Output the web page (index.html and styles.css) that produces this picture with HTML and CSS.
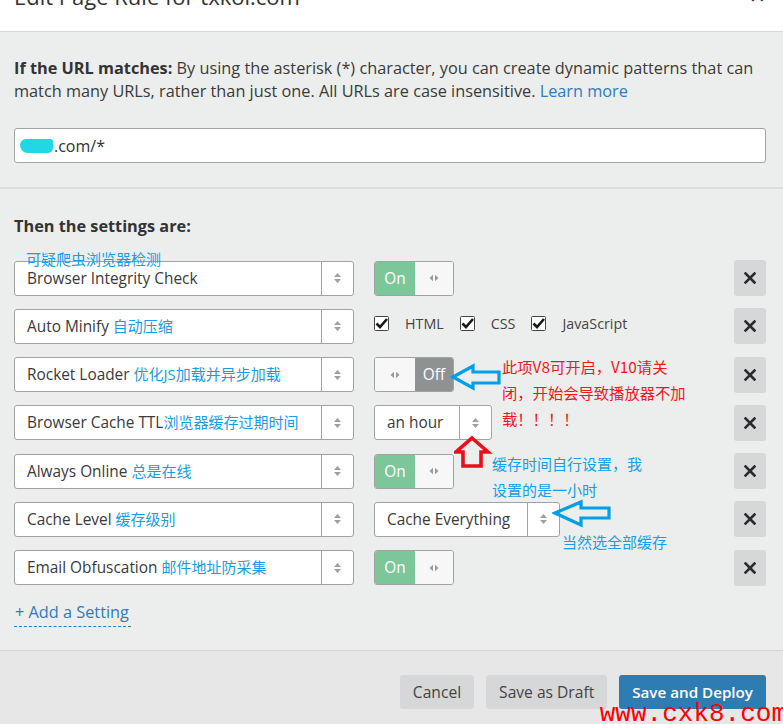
FILE: index.html
```html
<!DOCTYPE html>
<html lang="en">
<head>
<meta charset="utf-8">
<title>Edit Page Rule</title>
<link rel="stylesheet" href="styles.css">
</head>
<body>
<div class="modal">
  <header class="modal-header">
    <h2 class="title">Edit Page Rule for txkol.com</h2>
    <span class="close">✕</span>
  </header>

  <section class="url-section">
    <p class="intro"><strong>If the URL matches:</strong> By using the asterisk (*) character, you can create dynamic patterns that can match many URLs, rather than just one. All URLs are case insensitive. <a class="link" href="#">Learn more</a></p>
    <div class="url-input"><span class="blur"></span>.com/*</div>
  </section>

  <section class="settings">
    <h3 class="settings-title">Then the settings are:</h3>
    <div class="rows">
      <div class="row">
        <div class="select"><span class="label">Browser Integrity Check</span><span class="arrows"><svg width="9" height="12" viewBox="0 0 9 12"><path d="M4.5 1 L8 5 H1Z M4.5 11 L8 7 H1Z" fill="#a0a0a0"/></svg></span></div>
        <div class="value">
          <div class="toggle on"><span class="seg seg-on">On</span><span class="seg seg-knob"><svg width="10" height="8" viewBox="0 0 10 8"><path d="M0.5 4 L4 0.8 V7.2Z M9.5 4 L6 0.8 V7.2Z" fill="#9a9a9a"/></svg></span></div>
        </div>
        <button class="del"><svg width="12" height="12" viewBox="0 0 12 12"><path d="M1.5 1.5 L10.5 10.5 M10.5 1.5 L1.5 10.5" stroke="#2b2b2b" stroke-width="2.6" stroke-linecap="square"/></svg></button>
      </div>

      <div class="row">
        <div class="select"><span class="label">Auto Minify <span class="note">自动压缩</span></span><span class="arrows"><svg width="9" height="12" viewBox="0 0 9 12"><path d="M4.5 1 L8 5 H1Z M4.5 11 L8 7 H1Z" fill="#a0a0a0"/></svg></span></div>
        <div class="value checks">
          <label class="check"><svg width="15" height="15" viewBox="0 0 15 15"><rect x="0.5" y="0.5" width="14" height="14" rx="1" fill="#fff" stroke="#444"/><path d="M2.5 7.5 L6 11 L13 3" fill="none" stroke="#1a1a1a" stroke-width="2.6"/></svg><span>HTML</span></label>
          <label class="check"><svg width="15" height="15" viewBox="0 0 15 15"><rect x="0.5" y="0.5" width="14" height="14" rx="1" fill="#fff" stroke="#444"/><path d="M2.5 7.5 L6 11 L13 3" fill="none" stroke="#1a1a1a" stroke-width="2.6"/></svg><span>CSS</span></label>
          <label class="check"><svg width="15" height="15" viewBox="0 0 15 15"><rect x="0.5" y="0.5" width="14" height="14" rx="1" fill="#fff" stroke="#444"/><path d="M2.5 7.5 L6 11 L13 3" fill="none" stroke="#1a1a1a" stroke-width="2.6"/></svg><span>JavaScript</span></label>
        </div>
        <button class="del"><svg width="12" height="12" viewBox="0 0 12 12"><path d="M1.5 1.5 L10.5 10.5 M10.5 1.5 L1.5 10.5" stroke="#2b2b2b" stroke-width="2.6" stroke-linecap="square"/></svg></button>
      </div>

      <div class="row">
        <div class="select"><span class="label">Rocket Loader <span class="note">优化JS加载并异步加载</span></span><span class="arrows"><svg width="9" height="12" viewBox="0 0 9 12"><path d="M4.5 1 L8 5 H1Z M4.5 11 L8 7 H1Z" fill="#a0a0a0"/></svg></span></div>
        <div class="value">
          <div class="toggle off"><span class="seg seg-knob"><svg width="10" height="8" viewBox="0 0 10 8"><path d="M0.5 4 L4 0.8 V7.2Z M9.5 4 L6 0.8 V7.2Z" fill="#9a9a9a"/></svg></span><span class="seg seg-off">Off</span></div>
        </div>
        <button class="del"><svg width="12" height="12" viewBox="0 0 12 12"><path d="M1.5 1.5 L10.5 10.5 M10.5 1.5 L1.5 10.5" stroke="#2b2b2b" stroke-width="2.6" stroke-linecap="square"/></svg></button>
      </div>

      <div class="row">
        <div class="select"><span class="label">Browser Cache TTL<span class="note">浏览器缓存过期时间</span></span><span class="arrows"><svg width="9" height="12" viewBox="0 0 9 12"><path d="M4.5 1 L8 5 H1Z M4.5 11 L8 7 H1Z" fill="#a0a0a0"/></svg></span></div>
        <div class="value">
          <div class="select small hour"><span class="label">an hour</span><span class="arrows"><svg width="9" height="12" viewBox="0 0 9 12"><path d="M4.5 1 L8 5 H1Z M4.5 11 L8 7 H1Z" fill="#a0a0a0"/></svg></span></div>
        </div>
        <button class="del"><svg width="12" height="12" viewBox="0 0 12 12"><path d="M1.5 1.5 L10.5 10.5 M10.5 1.5 L1.5 10.5" stroke="#2b2b2b" stroke-width="2.6" stroke-linecap="square"/></svg></button>
      </div>

      <div class="row">
        <div class="select"><span class="label">Always Online <span class="note">总是在线</span></span><span class="arrows"><svg width="9" height="12" viewBox="0 0 9 12"><path d="M4.5 1 L8 5 H1Z M4.5 11 L8 7 H1Z" fill="#a0a0a0"/></svg></span></div>
        <div class="value">
          <div class="toggle on"><span class="seg seg-on">On</span><span class="seg seg-knob"><svg width="10" height="8" viewBox="0 0 10 8"><path d="M0.5 4 L4 0.8 V7.2Z M9.5 4 L6 0.8 V7.2Z" fill="#9a9a9a"/></svg></span></div>
        </div>
        <button class="del"><svg width="12" height="12" viewBox="0 0 12 12"><path d="M1.5 1.5 L10.5 10.5 M10.5 1.5 L1.5 10.5" stroke="#2b2b2b" stroke-width="2.6" stroke-linecap="square"/></svg></button>
      </div>

      <div class="row">
        <div class="select"><span class="label">Cache Level <span class="note">缓存级别</span></span><span class="arrows"><svg width="9" height="12" viewBox="0 0 9 12"><path d="M4.5 1 L8 5 H1Z M4.5 11 L8 7 H1Z" fill="#a0a0a0"/></svg></span></div>
        <div class="value">
          <div class="select small cache"><span class="label">Cache Everything</span><span class="arrows"><svg width="9" height="12" viewBox="0 0 9 12"><path d="M4.5 1 L8 5 H1Z M4.5 11 L8 7 H1Z" fill="#a0a0a0"/></svg></span></div>
        </div>
        <button class="del"><svg width="12" height="12" viewBox="0 0 12 12"><path d="M1.5 1.5 L10.5 10.5 M10.5 1.5 L1.5 10.5" stroke="#2b2b2b" stroke-width="2.6" stroke-linecap="square"/></svg></button>
      </div>

      <div class="row">
        <div class="select"><span class="label">Email Obfuscation <span class="note">邮件地址防采集</span></span><span class="arrows"><svg width="9" height="12" viewBox="0 0 9 12"><path d="M4.5 1 L8 5 H1Z M4.5 11 L8 7 H1Z" fill="#a0a0a0"/></svg></span></div>
        <div class="value">
          <div class="toggle on"><span class="seg seg-on">On</span><span class="seg seg-knob"><svg width="10" height="8" viewBox="0 0 10 8"><path d="M0.5 4 L4 0.8 V7.2Z M9.5 4 L6 0.8 V7.2Z" fill="#9a9a9a"/></svg></span></div>
        </div>
        <button class="del"><svg width="12" height="12" viewBox="0 0 12 12"><path d="M1.5 1.5 L10.5 10.5 M10.5 1.5 L1.5 10.5" stroke="#2b2b2b" stroke-width="2.6" stroke-linecap="square"/></svg></button>
      </div>
    </div>
    <a class="add" href="#">+ Add a Setting</a>
  </section>

  <footer class="modal-footer">
    <button class="btn">Cancel</button>
    <button class="btn">Save as Draft</button>
    <button class="btn primary">Save and Deploy</button>
  </footer>

  <!-- annotations drawn over the screenshot -->
  <span class="ann blue ann-1">可疑爬虫浏览器检测</span>
  <svg class="arrow arrow-1" width="56" height="28" viewBox="0 0 56 28"><polygon points="3,14 23,3 23,9 49,9 49,20 23,20 23,25" fill="none" stroke="#00a0e9" stroke-width="3.2" stroke-linejoin="miter"/></svg>
  <p class="ann red ann-2">此项V8可开启，V10请关<br>闭，开始会导致播放器不加<br>载！！！！</p>
  <svg class="arrow arrow-2" width="40" height="34" viewBox="0 0 40 34"><polygon points="18,3 34,17 27,17 27,31 9,31 9,17 2,17" fill="none" stroke="#e8101a" stroke-width="3.6" stroke-linejoin="miter"/></svg>
  <p class="ann blue ann-3">缓存时间自行设置，我<br>设置的是一小时</p>
  <svg class="arrow arrow-3" width="62" height="30" viewBox="0 0 62 30"><polygon points="3,15 29,4 29,10 57,10 57,20 29,20 29,27" fill="none" stroke="#00a0e9" stroke-width="3.2" stroke-linejoin="miter"/></svg>
  <span class="ann blue ann-4">当然选全部缓存</span>
  <span class="watermark">www.cxk8.com</span>
</div>
</body>
</html>
```

FILE: styles.css
```css
* { box-sizing: border-box; }
html, body { margin: 0; padding: 0; }
body {
  background: #eceeed;
  font-family: "Open Sans", "Noto Sans CJK SC", sans-serif;
  color: #333;
  overflow: hidden;
}
.modal {
  position: relative;
  width: 783px;
  height: 724px;
  background: #eceeed;
  overflow: hidden;
}
.modal-header {
  height: 32px;
  background: #fff;
  border-bottom: 1px solid #d6d8d8;
  display: flex;
  justify-content: space-between;
  align-items: flex-start;
  padding: 0 17px 0 14px;
}
.title {
  margin: -17px 0 0;
  font-size: 22px;
  line-height: 26px;
  font-weight: 400;
  color: #333;
}
.close {
  margin-top: -15px;
  font-size: 20px;
  line-height: 22px;
  color: #333;
}
.url-section {
  padding: 25px 17px 24px 14px;
  border-bottom: 2px solid #dcdedd;
}
.intro {
  margin: 0;
  font-size: 16.3px;
  line-height: 23px;
  color: #3a3a3a;
}
.intro strong { font-weight: 700; color: #333; }
.link { color: #2f7bbf; text-decoration: none; }
.url-input {
  margin-top: 25px;
  height: 35px;
  background: #fff;
  border: 1px solid #a3a5a5;
  border-radius: 3px;
  display: flex;
  align-items: center;
  padding-left: 5px;
  font-size: 16px;
  color: #333;
}
.blur {
  display: inline-block;
  width: 33px;
  height: 14px;
  background: #22d6e6;
  border-radius: 6px 3px 5px 8px;
  margin-right: 1px;
}
.settings {
  padding: 26px 17px 0 14px;
  height: 461px;
}
.settings-title {
  margin: 0 0 22px;
  font-size: 16.3px;
  line-height: 23px;
  font-weight: 700;
  color: #333;
}
.rows {
  display: flex;
  flex-direction: column;
  gap: 13.3px;
}
.row {
  display: grid;
  grid-template-columns: 340px 1fr 32px;
  column-gap: 20px;
  align-items: center;
  height: 35px;
}
.select {
  height: 35px;
  background: #fff;
  border: 1px solid #a0a3a3;
  border-radius: 3px;
  display: flex;
  align-items: stretch;
}
.select .label {
  flex: 1;
  display: block;
  line-height: 33px;
  padding-left: 12px;
  font-size: 15.4px;
  color: #3a3a3a;
  white-space: nowrap;
  overflow: hidden;
}
.note {
  color: #1b9be0;
  font-size: 15px;
}
.arrows {
  width: 32px;
  border-left: 1px solid #a0a3a3;
  display: flex;
  align-items: center;
  justify-content: center;
}
.select.small { display: inline-flex; }
.select.hour { width: 118px; }
.select.cache { width: 186px; }
.value { display: flex; align-items: center; }
.toggle {
  width: 80px;
  height: 35px;
  border: 1px solid #a0a3a3;
  border-radius: 3px;
  display: flex;
  overflow: hidden;
  background: #f7f7f7;
}
.seg {
  width: 40px;
  display: flex;
  align-items: center;
  justify-content: center;
  font-size: 15.4px;
}
.seg-on { background: #7cc799; color: #fff; }
.seg-off { background: #8e9293; color: #fff; flex: 1; }
.seg-knob { flex: 1; background: #f7f7f7; }
.toggle.off .seg-knob { flex: none; width: 40px; }
.checks { gap: 16px; }
.check {
  display: flex;
  align-items: center;
  gap: 16px;
  font-size: 14.3px;
  color: #444;
  margin-top: -6px;
}
.del {
  width: 32px;
  height: 36px;
  border: 0;
  border-radius: 3px;
  background: #d6d7d8;
  display: flex;
  align-items: center;
  justify-content: center;
  padding: 0;
}
.add {
  display: inline-block;
  margin-top: 16px;
  font-size: 16.3px;
  line-height: 22px;
  color: #2f7bbf;
  text-decoration: none;
  border-bottom: 1px dashed #2f7bbf;
  padding: 0 2px 3px 1px;
}
.modal-footer {
  border-top: 1px solid #d3d5d5;
  background: #e7e7e7;
  height: 74px;
  padding: 24px 17px 0 0;
  display: flex;
  justify-content: flex-end;
  align-items: flex-start;
  gap: 12px;
}
.btn {
  height: 34px;
  border: 0;
  border-radius: 3px;
  background: #d6d7d8;
  color: #444;
  font-family: "Open Sans", sans-serif;
  font-size: 15.6px;
  padding: 0 13px;
}
.btn.primary {
  background: #2d7db3;
  color: #fff;
  font-weight: 600;
  font-size: 15.2px;
  padding: 0 13px;
}
.ann {
  position: absolute;
  margin: 0;
  font-size: 15px;
  line-height: 26px;
  font-family: "Noto Sans CJK SC", sans-serif;
  white-space: nowrap;
}
.blue { color: #169ee6; }
.red { color: #f01818; }
.ann-1 { left: 26px; top: 246px; line-height: 26px; }
.ann-2 { left: 502px; top: 353px; font-size: 15.3px; }
.ann-3 { left: 492px; top: 451px; }
.ann-4 { left: 562px; top: 529px; }
.arrow { position: absolute; }
.arrow-1 { left: 450px; top: 363px; }
.arrow-2 { left: 454px; top: 435px; }
.arrow-3 { left: 552px; top: 498px; }
.watermark {
  position: absolute;
  right: -4px;
  bottom: -5px;
  font-family: "Liberation Mono", monospace;
  font-size: 26px;
  line-height: 30px;
  color: #ff0000;
  letter-spacing: 0;
}
```
